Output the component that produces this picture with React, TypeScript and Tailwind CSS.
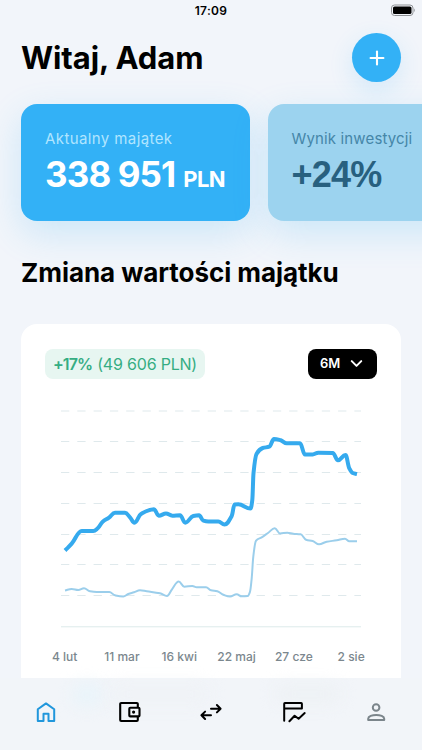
import { Plus, ChevronDown } from "lucide-react"

type Point = [number, number]

const wealth: Point[] = [
  [65, 550.5], [71.7, 543.7], [81.7, 531], [93.3, 531], [97.7, 528.3], [102.7, 521.7], [109, 517.7],
  [115, 512.8], [125, 512.8], [130, 517.3], [134.5, 522.7], [141, 514], [154, 509.3], [158.8, 515.7],
  [166, 513.5], [172.3, 515.7], [180, 515.3], [185.3, 522.7], [193.3, 516], [199, 515.3], [203.3, 520.7],
  [208.3, 521.5], [218.3, 521.5], [224.5, 524.5], [231.7, 516], [234.6, 504.5], [238.3, 504.3],
  [250.5, 508.5], [252.3, 500], [253.5, 473.3], [256.5, 454], [262.7, 448], [269.3, 446.7], [274, 439],
  [280.7, 440.3], [286.7, 443.3], [300, 443.3], [305, 454.5], [312.7, 454.5], [318.3, 452.7],
  [332.7, 453], [338, 460.3], [345.5, 455], [349.3, 468.3], [352.7, 473], [357, 474],
]

const invested: Point[] = [
  [65, 590.5], [71.7, 589], [78.3, 590], [84, 588.3], [90, 591.3], [96.7, 592], [109.3, 592],
  [115, 595.3], [123.3, 596.5], [128.3, 594], [134, 592.3], [140, 590.3], [146.7, 591.3], [160, 593.3],
  [167, 596], [172, 589.3], [178.7, 581.6], [184.3, 586.7], [192.3, 586], [196.7, 587.3], [206, 587.3],
  [211, 590.3], [217.3, 591.3], [223.3, 594.7], [230, 596.5], [236.7, 594.3], [241.7, 596.3],
  [247.7, 596], [250, 591.7], [251.7, 578.3], [253.3, 556.7], [256, 540.7], [261.7, 537.3],
  [268.3, 532.7], [274.7, 528.2], [280, 533.5], [287.3, 532.7], [293.3, 533.7], [300.7, 534.3],
  [306, 539.7], [312.7, 541], [319, 544.3], [326.7, 541.7], [336.7, 540.3], [345, 538.7],
  [349.3, 541.3], [357, 541.3],
]

const gridLines = [411, 441.5, 472.5, 503.5, 534.5, 564.5, 595.5]
const months = ["4 lut", "11 mar", "16 kwi", "22 maj", "27 cze", "2 sie"]

// Monotone cubic interpolation, so the curve never overshoots a point
function smoothPath(points: Point[]) {
  const slopes = points.slice(1).map((p, i) => (p[1] - points[i][1]) / (p[0] - points[i][0]))
  const tangents = points.map((_, i) => {
    if (i === 0) return slopes[0]
    if (i === points.length - 1) return slopes[i - 1]
    const a = slopes[i - 1]
    const b = slopes[i]
    return a * b <= 0 ? 0 : (2 * a * b) / (a + b)
  })
  let d = `M${points[0][0]} ${points[0][1]}`
  for (let i = 1; i < points.length; i++) {
    const [x0, y0] = points[i - 1]
    const [x1, y1] = points[i]
    const dx = (x1 - x0) / 2.5
    d += `C${x0 + dx} ${y0 + tangents[i - 1] * dx} ${x1 - dx} ${y1 - tangents[i] * dx} ${x1} ${y1}`
  }
  return d
}

function StatusBar() {
  return (
    <div className="relative flex h-[22px] items-center justify-center">
      <span className="text-[12px] font-semibold leading-none tracking-[0.3px]">17:09</span>
      <svg className="absolute right-[6px] top-[4px]" width="25" height="13" viewBox="0 0 25 13" fill="none">
        <rect x="0.5" y="1" width="21.5" height="10.5" rx="3" stroke="#8f9296" />
        <rect x="2" y="2.5" width="18.5" height="7.5" rx="1.6" fill="black" />
        <path d="M23.2 4.6c1 .4 1 2.9 0 3.3z" fill="#8f9296" />
      </svg>
    </div>
  )
}

function Chart() {
  return (
    <svg className="mt-[22px] block" width="332" height="230" viewBox="45 401 332 230" fill="none">
      {gridLines.map((y) => (
        <line key={y} x1="61" x2="361" y1={y} y2={y} stroke="#dfe9ec" strokeDasharray="8.3 8" />
      ))}
      <line x1="61" x2="361" y1="626.8" y2="626.8" stroke="#dceaea" />
      <path d={smoothPath(invested)} stroke="#9bceeb" strokeWidth="2" />
      <path d={smoothPath(wealth)} stroke="#35aaee" strokeWidth="4" strokeLinejoin="round" />
    </svg>
  )
}

function TabBar() {
  return (
    <nav className="absolute inset-x-0 bottom-0 flex h-[72px] items-start justify-between bg-[#f2f5f9] px-[34px] pt-[22px]">
      <div className="absolute left-[72px] top-[5px] h-[24px] w-[30px] rounded-full bg-[#e9f4fa] blur-[8px]" />
      <div className="absolute left-[110px] top-[7px] h-[18px] w-[100px] rounded-full bg-[#eff2f6] blur-[8px]" />
      <div className="absolute left-[275px] top-[7px] h-[18px] w-[66px] rounded-full bg-[#edf1f4] blur-[8px]" />
      <svg className="relative" width="24" height="24" viewBox="0 0 24 24" fill="none" stroke="#2197dc" strokeWidth="2" strokeLinejoin="round">
        <path d="M3.8 9.3 12 3.4l8.2 5.9V21h-5.7v-7.3h-5V21H3.8z" />
      </svg>
      <svg className="relative" width="24" height="24" viewBox="0 0 24 24" fill="none" stroke="black" strokeWidth="2.1" strokeLinejoin="round">
        <path d="M20.8 7.5V4q0-1-1-1H4.2q-1 0-1 1v16q0 1 1 1h15.6q1 0 1-1v-3.5" />
        <rect x="12.3" y="7.7" width="10.2" height="8.7" rx="1" />
        <circle cx="16.6" cy="12.1" r="1.6" fill="black" stroke="none" />
      </svg>
      <svg className="relative" width="24" height="24" viewBox="0 0 24 24" fill="none" stroke="black" strokeWidth="2" strokeLinecap="round" strokeLinejoin="round">
        <path d="M12 8.7h9.6M17.9 5l3.7 3.7-3.7 3.7M12 15.3H2.4M6.1 11.6l-3.7 3.7 3.7 3.7" />
      </svg>
      <svg className="relative" width="24" height="24" viewBox="0 0 24 24" fill="none" stroke="black" strokeWidth="2" strokeLinecap="round" strokeLinejoin="round">
        <path d="M2.2 20.8V3.8q0-.7.7-.7h16.3q.7 0 .7.7v4.7H2.2M7.4 21.3l5.2-5.6 4 3 6.1-5.6" />
      </svg>
      <svg className="relative" width="24" height="24" viewBox="0 0 24 24" fill="none" stroke="#7b858b" strokeWidth="2" strokeLinejoin="round">
        <circle cx="12.1" cy="7.5" r="3.3" />
        <path d="M4.2 20v-1.3c0-2.3 4-3.8 8-3.8s8 1.5 8 3.800V20z" />
      </svg>
    </nav>
  )
}

export default function App() {
  return (
    <div className="relative h-[750px] w-[422px] overflow-hidden bg-[#f2f5fa] font-['Inter','Liberation_Sans',sans-serif] text-black">
      <StatusBar />

      <header className="flex items-center justify-between pl-[21px] pr-[21px] pt-[11px]">
        <h1 className="text-[31px] font-bold leading-[48px] tracking-[-0.1px]">Witaj, Adam</h1>
        <button className="flex size-[49px] items-center justify-center rounded-full bg-[#33b1f6] text-white shadow-[0_8px_24px_rgba(51,177,246,0.16)]">
          <Plus size={22} strokeWidth={2.3} />
        </button>
      </header>

      <section className="mt-[21.5px] flex gap-[18px] pl-[21px]">
        <div className="h-[117px] w-[228.5px] shrink-0 rounded-[16px] bg-[#33b1f6] pl-6 pt-[24px] shadow-[0_12px_36px_rgba(51,177,246,0.2)]">
          <p className="whitespace-nowrap text-[15px] leading-[22px] tracking-[0.4px] text-[#b0e5ff]">Aktualny majątek</p>
          <p className="whitespace-nowrap font-bold leading-[48px] text-white">
            <span className="text-[35px] tracking-[-0.9px]">338 951</span>
            <span className="ml-[8px] text-[22px] tracking-[-0.5px]">PLN</span>
          </p>
        </div>
        <div className="h-[117px] w-[229px] shrink-0 rounded-[16px] bg-[#9cd3ef] pl-6 pt-[24px] shadow-[0_12px_36px_rgba(51,177,246,0.2)]">
          <p className="whitespace-nowrap text-[15px] leading-[22px] tracking-[0.15px] text-[#4586a8]">Wynik inwestycji</p>
          <p className="font-['Liberation_Sans',sans-serif] text-[36px] font-bold leading-[50px] tracking-[-0.8px] text-[#28607f]">+24%</p>
        </div>
      </section>

      <h2 className="mt-[36px] whitespace-nowrap pl-[21px] text-[26px] font-bold leading-[32px] tracking-[-0.05px]">Zmiana wartości majątku</h2>

      <section className="mx-[21px] mt-[35.5px] h-[420px] rounded-[16px] bg-white px-6 pt-[24.5px]">
        <div className="flex items-center justify-between">
          <div className="flex h-[30px] w-[160px] items-center justify-center whitespace-nowrap rounded-[8px] bg-[#e7f6f1] text-[16px] tracking-[-0.2px] text-[#35ad83]">
            <span className="mr-[5px] font-semibold tracking-[-0.9px]">+17%</span>(49 606 PLN)
          </div>
          <button className="flex h-[30px] w-[69px] items-center justify-between rounded-[8px] bg-black pl-3 pr-[11px] text-[13px] font-semibold text-white">
            6M
            <ChevronDown size={19} strokeWidth={2.5} />
          </button>
        </div>
        <Chart />
        <div className="mt-[17px] flex text-[12px] font-medium leading-[18px] text-[#7b878e]">
          {months.map((month) => (
            <span key={month} className="-ml-[9px] mr-[9px] w-[57.3px] shrink-0 text-center">{month}</span>
          ))}
        </div>
      </section>

      <TabBar />
    </div>
  )
}
